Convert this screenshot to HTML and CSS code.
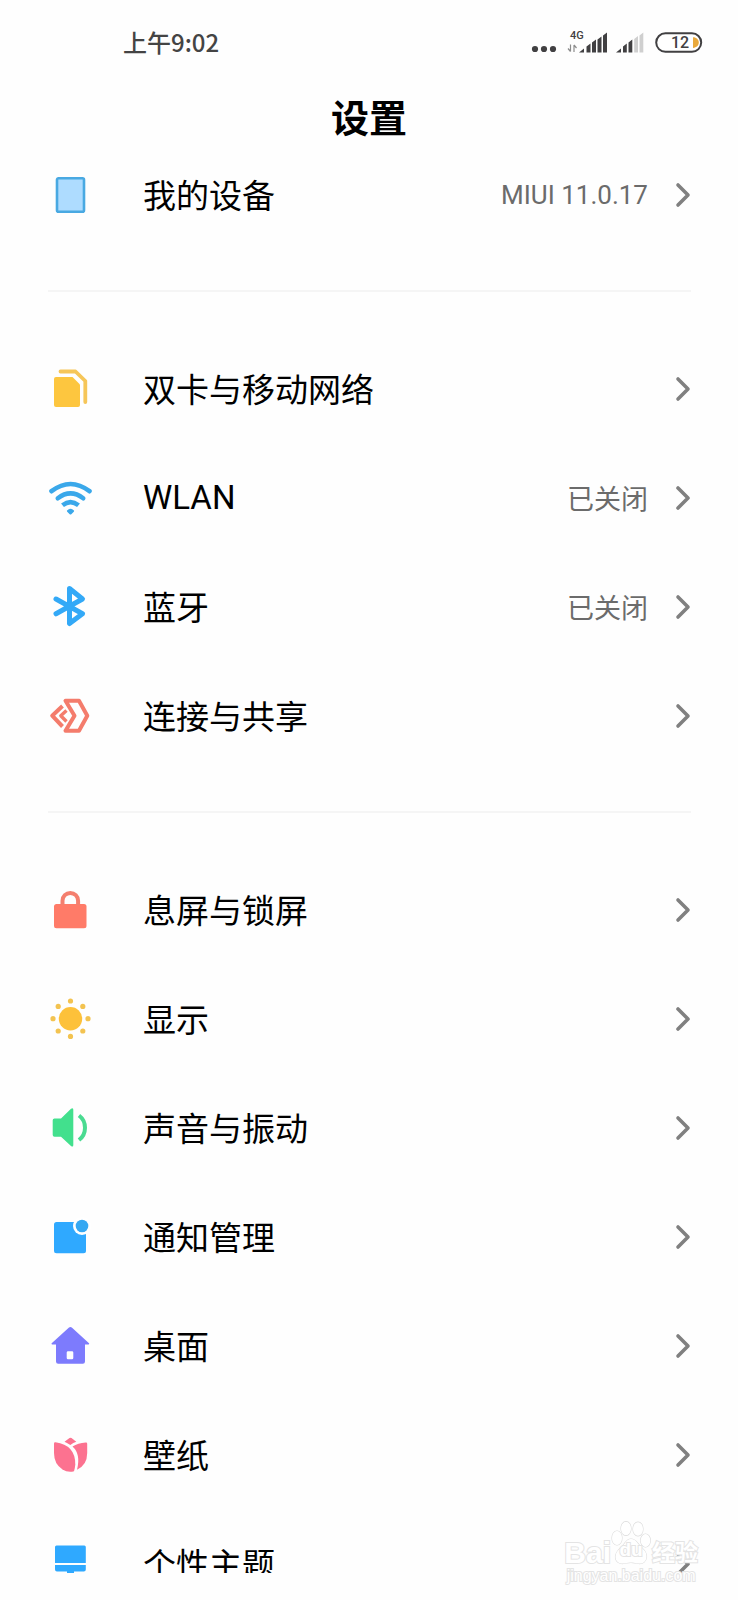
FILE: index.html
```html
<!DOCTYPE html>
<html lang="zh-CN">
<head>
<meta charset="utf-8">
<meta name="viewport" content="width=device-width, initial-scale=1">
<title>设置</title>
<link rel="stylesheet" href="styles.css">
</head>
<body>
<svg class="defs" aria-hidden="true">
  <symbol id="chevron" viewBox="0 0 16 26"><path d="M3 3l10 10L3 23" fill="none" stroke="#808080" stroke-width="3.6" stroke-linecap="round" stroke-linejoin="round"/></symbol>
</svg>
<div class="screen">
  <header class="status">
    <time class="clock">上午9:02</time>
    <div class="indicators">
      <svg width="28" height="24" viewBox="0 0 28 24" fill="#414042"><circle cx="5" cy="18" r="3.1"/><circle cx="14" cy="18" r="3.1"/><circle cx="23" cy="18" r="3.1"/></svg>
      <svg class="signal-main" width="42" height="24" viewBox="0 0 42 24" fill="#414042">
        <text class="net" x="3" y="8">4G</text>
        <g fill="none" stroke="#8c8c8c" stroke-width="1.2"><path d="M3.500 13.500v7M1 17.500l2.500 3M7 21v-7M9.500 17L7 14"/></g>
        <path d="M12 21.500l5-4v4zM19.500 21.500v-6l4-3v9zM25 21.500v-10l4-3v13zM30.500 21.500v-13l4-3v16zM36 21.500v-17l4-3v20z"/>
      </svg>
      <svg class="signal-second" width="30" height="24" viewBox="0 0 30 24">
        <path fill="#414042" d="M1 21.500l5-4v4zM8 21.500v-6l3.800-3v9zM13.500 21.500v-10l3.800-3v13z"/>
        <path fill="#cfcfcf" d="M19.200 21.500V8l3.800-3v16.500zM24.500 21.500v-17l3.800-3v20z"/>
      </svg>
      <svg width="48" height="24" viewBox="0 0 48 24">
        <rect x="1.200" y="2.300" width="45" height="18.500" rx="9.250" fill="#fff" stroke="#414042" stroke-width="2"/>
        <path d="M38 6.300c3.500 0 5.800 2.500 5.800 5.300S41.500 16.900 38 16.900z" fill="#e9a93c"/>
        <text class="charge" x="16" y="17">12</text>
      </svg>
    </div>
  </header>
  <h1 class="title">设置</h1>
  <main class="list">
    <nav class="group">
      <a class="row" href="#device">
        <svg class="icon" viewBox="0 0 44 44"><rect x="9" y="5.300" width="27" height="33.500" rx="1.500" fill="#aedcff" stroke="#49a9e2" stroke-width="2.600"/></svg>
        <span class="label">我的设备</span><span class="value version">MIUI 11.0.17</span><svg class="go"><use href="#chevron"/></svg>
      </a>
    </nav>
    <nav class="group">
      <a class="row" href="#sim">
        <svg class="icon" viewBox="0 0 44 44"><path d="M8 10h16.500L32 17.500V38a2 2 0 0 1-2 2H8a2 2 0 0 1-2-2V12a2 2 0 0 1 2-2z" fill="#fdc63f"/><path d="M12.500 4.500H27.500L37.300 14v21" fill="none" stroke="#f6c659" stroke-width="3.800" stroke-linecap="round" stroke-linejoin="round"/></svg>
        <span class="label">双卡与移动网络</span><svg class="go"><use href="#chevron"/></svg>
      </a>
      <a class="row" href="#wlan">
        <svg class="icon" viewBox="0 0 44 44"><g fill="none" stroke="#3aa8ea" stroke-width="4.600" stroke-linecap="round"><path d="M3.500 15.200Q22.500 .8 41.500 15.200"/><path d="M9.800 22.300Q22.500 12.500 35.200 22.300"/><path stroke-linecap="butt" d="M14.500 29.300Q22.500 23 30.500 29.300"/></g><path d="M19 34.500q3.500-3.500 7 0q.3.700-.2 1.200l-2.500 2.500q-.8.600-1.600 0l-2.500-2.500q-.5-.5-.2-1.200z" fill="#3aa8ea"/></svg>
        <span class="label">WLAN</span><span class="value">已关闭</span><svg class="go"><use href="#chevron"/></svg>
      </a>
      <a class="row" href="#bluetooth">
        <svg class="icon" viewBox="0 0 44 44"><path d="M8 14L34.500 28.800 21.500 38.500V3.500L34.500 14 8 28.800" fill="none" stroke="#33a9f7" stroke-width="5" stroke-linecap="round" stroke-linejoin="round"/></svg>
        <span class="label">蓝牙</span><span class="value">已关闭</span><svg class="go"><use href="#chevron"/></svg>
      </a>
      <a class="row" href="#share">
        <svg class="icon" viewBox="0 0 44 44"><g fill="none" stroke="#f47c6c" stroke-width="4" stroke-linejoin="round"><path d="M17.500 6.800H31L39.300 21.700 31 36.800H17.500L26.500 21.700z"/><path d="M14.500 12L4.200 21.700 14.500 32.500"/><path stroke-width="3.400" d="M18.500 16.500L12.800 21.700 18.500 27.500"/></g></svg>
        <span class="label">连接与共享</span><svg class="go"><use href="#chevron"/></svg>
      </a>
    </nav>
    <nav class="group">
      <a class="row" href="#lock">
        <svg class="icon" viewBox="0 0 44 44"><rect x="6" y="16" width="32.500" height="24.300" rx="2.500" fill="#ff7b68"/><path d="M14.500 17v-4.300a7.800 7.800 0 0 1 15.600 0V17" fill="none" stroke="#f47f6e" stroke-width="4"/></svg>
        <span class="label">息屏与锁屏</span><svg class="go"><use href="#chevron"/></svg>
      </a>
      <a class="row" href="#display">
        <svg class="icon" viewBox="0 0 44 44"><circle cx="22.500" cy="21.700" r="11.700" fill="#fdc13a"/><g fill="#f3c350"><circle cx="22.500" cy="4" r="2.600"/><circle cx="22.500" cy="39.400" r="2.600"/><circle cx="5" cy="21.700" r="2.600"/><circle cx="40" cy="21.700" r="2.600"/><circle cx="10.200" cy="9.400" r="2.600"/><circle cx="34.800" cy="9.400" r="2.600"/><circle cx="10.200" cy="34" r="2.600"/><circle cx="34.800" cy="34" r="2.600"/></g></svg>
        <span class="label">显示</span><svg class="go"><use href="#chevron"/></svg>
      </a>
      <a class="row" href="#sound">
        <svg class="icon" viewBox="0 0 44 44"><path d="M6.500 12.500H13L23 2.800q2.300-1.500 2.300 1V39q0 2.500-2.300 1L13 30.700H6.500q-1.800 0-1.800-1.800V14.300q0-1.800 1.800-1.800z" fill="#42e08d"/><path d="M31 9.500Q37 14 37 21.700T31 34" fill="none" stroke="#4adb91" stroke-width="4"/></svg>
        <span class="label">声音与振动</span><svg class="go"><use href="#chevron"/></svg>
      </a>
      <a class="row" href="#notifications">
        <svg class="icon" viewBox="0 0 44 44"><rect x="6" y="7" width="32" height="31.300" rx="2.500" fill="#2fa9ff"/><circle cx="34" cy="11" r="9" fill="#fff"/><circle cx="34" cy="11" r="6.300" fill="#35a8f2"/></svg>
        <span class="label">通知管理</span><svg class="go"><use href="#chevron"/></svg>
      </a>
      <a class="row" href="#home">
        <svg class="icon" viewBox="0 0 44 44"><path fill-rule="evenodd" d="M21 3.600q1.400-1 2.800 0L41 19.200q.8 1-.5 1.300H37V37.500q0 2.200-2.200 2.200H10.200Q8 39.700 8 37.500V20.500H4.200q-1.300-.3-.5-1.300zM20 27.300q-1.300 0-1.300 1.300V34q0 1.300 1.300 1.300h4q1.300 0 1.300-1.300V28.600q0-1.300-1.300-1.300z" fill="#7d7bfd"/></svg>
        <span class="label">桌面</span><svg class="go"><use href="#chevron"/></svg>
      </a>
      <a class="row" href="#wallpaper">
        <svg class="icon" viewBox="0 0 44 44"><g fill="#fc7290"><path d="M6 10.500q0-1.500 1.500-1.300Q27.500 12 27.300 31.500 27 35 26 38.300 20 40 14.500 36.500 6 31 6 20z"/><path d="M39.200 10.700q0-1.500-1.500-1.300Q30 10 24.500 13.500 33 21 29 36.700 39.200 32 39.200 20z"/><path d="M16.500 8.800L21.500 5q1-.7 2 0l4.800 3.800q-3 1-6 3.200-2.800-2-5.800-3.200z"/></g></svg>
        <span class="label">壁纸</span><svg class="go"><use href="#chevron"/></svg>
      </a>
      <a class="row" href="#themes">
        <svg class="icon" viewBox="0 0 44 44"><path d="M8.500 3.500h27.800q1.500 0 1.500 1.500V21H7V5q0-1.500 1.500-1.500zM7 23h30.800v4.500q0 2-2 2H26V31h-7v-1.500H9q-2 0-2-2z" fill="#2fa9ff"/></svg>
        <span class="label">个性主题</span><svg class="go"><use href="#chevron"/></svg>
      </a>
    </nav>
  </main>
  <div class="watermark">
    <div class="brand">
      <span class="bai">Bai</span>
      <span class="paw">
        <svg width="40" height="44" viewBox="0 0 40 44" fill="#fff" stroke="#dcdcdc" stroke-width="1.200"><ellipse cx="6" cy="17" rx="5" ry="7"/><ellipse cx="15" cy="7.500" rx="5" ry="6.800"/><ellipse cx="27" cy="8" rx="5" ry="6.800"/><ellipse cx="34.500" cy="19.500" rx="4.800" ry="6.500"/><path d="M20 18c5 0 6 4 9 7s7 6 6.500 11-4 7-8 6.500-5-1-7.500-1-4 .5-7.500 1-8-1.500-8-6.500 4-8 7-11 4-7 8.500-7z"/></svg>
        <span class="du">du</span>
      </span>
      <span class="jingyan">经验</span>
    </div>
    <div class="site">jingyan.baidu.com</div>
  </div>
</div>
</body>
</html>
```
FILE: styles.css
```css
* {
  box-sizing: border-box;
}

body {
  margin: 0;
  background: #fefefe;
  color: #000;
  font-family: Roboto, "Noto Sans CJK SC", sans-serif;
}

.defs {
  display: none;
}

.screen {
  position: relative;
  display: flex;
  flex-direction: column;
  height: 100vh;
  padding-bottom: 27px;
  overflow: hidden;
}

.status {
  display: flex;
  flex: none;
  align-items: center;
  justify-content: space-between;
  height: 86px;
  padding: 0 35px 0 123px;
}

.clock {
  padding-bottom: 4px;
  color: #444;
  font-family: "Noto Sans CJK SC", sans-serif;
  font-size: 24px;
  font-weight: 500;
}

.indicators {
  display: flex;
  align-items: center;
}

.signal-main {
  margin-left: 9px;
  overflow: visible;
}

.signal-second {
  margin: 0 10px 0 6px;
}

.net {
  font-size: 11px;
  font-weight: 500;
}

.charge {
  fill: #414042;
  font-size: 16px;
  font-weight: 500;
}

.title {
  flex: none;
  height: 54px;
  margin: 0;
  font-size: 38px;
  font-weight: 700;
  line-height: 66px;
  text-align: center;
}

.list {
  flex: 1;
  min-height: 0;
  overflow: hidden;
}

.group {
  margin: 0 47px 0 48px;
}

.group + .group {
  margin-top: 41px;
  padding-top: 42px;
  border-top: 2px solid #f5f5f5;
}

.row {
  display: flex;
  align-items: center;
  height: 109px;
  color: inherit;
  text-decoration: none;
}

.icon {
  flex: none;
  width: 44px;
  height: 44px;
  margin-right: 51px;
}

.label {
  flex: 1;
  padding-bottom: 1px;
  font-size: 33px;
}

.value {
  padding-bottom: 1px;
  color: #6b6b6b;
  font-size: 27px;
}

.version {
  padding-bottom: 0;
  font-size: 26px;
}

.go {
  flex: none;
  width: 16px;
  height: 26px;
  margin-left: 27px;
}

.watermark {
  position: absolute;
  right: 40px;
  bottom: 13px;
  color: #fff;
  font-family: "Liberation Sans", "Noto Sans CJK SC", sans-serif;
  paint-order: stroke fill;
  -webkit-text-stroke: 2px #e4e4e4;
}

.brand {
  display: flex;
  align-items: flex-end;
  height: 44px;
  font-weight: 700;
  line-height: 24px;
}

.bai {
  font-size: 30px;
}

.paw {
  position: relative;
  height: 44px;
  margin-right: 1px;
}

.du {
  position: absolute;
  right: 0;
  bottom: 3px;
  left: 0;
  font-size: 19px;
  text-align: center;
}

.jingyan {
  font-size: 23px;
}

.site {
  font-size: 16px;
  line-height: 22px;
  text-align: center;
}
```
